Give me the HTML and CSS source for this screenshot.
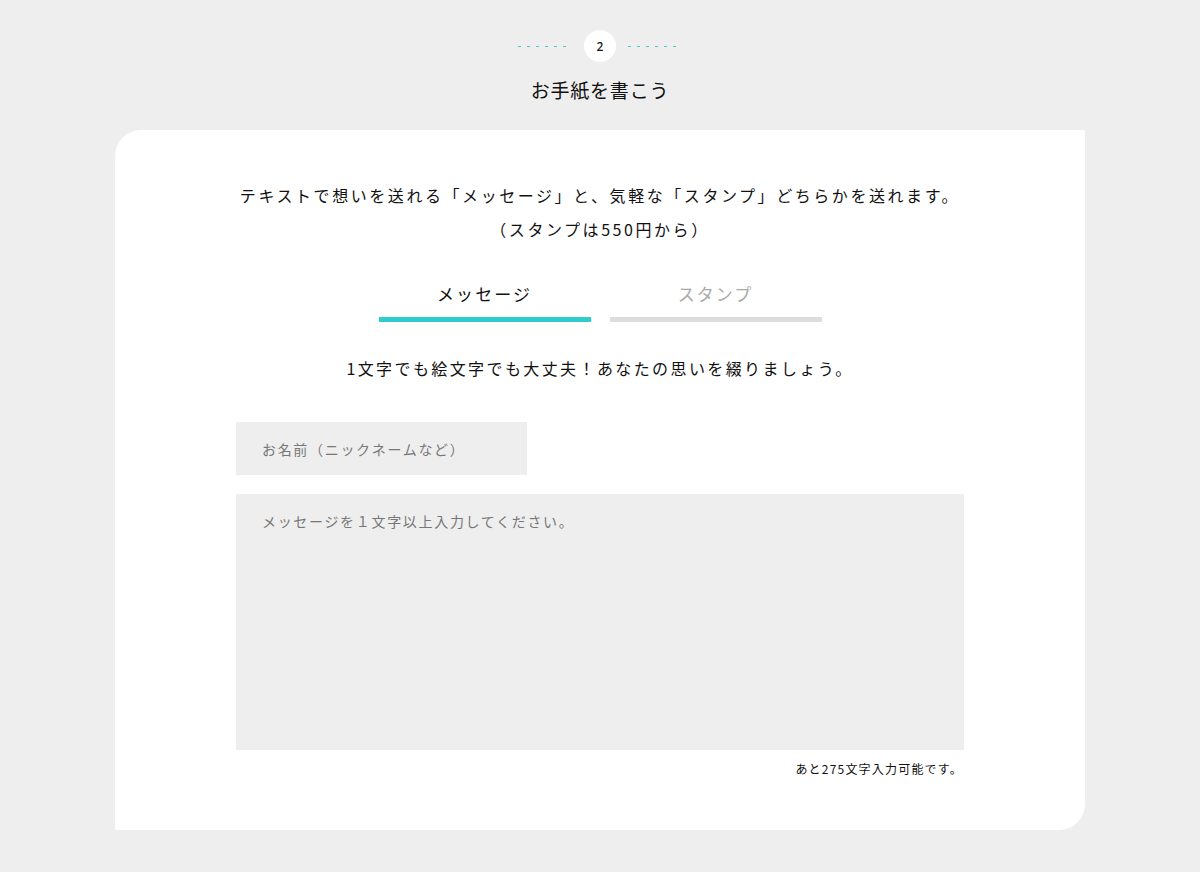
FILE: index.html
```html
<!DOCTYPE html>
<html lang="ja">
<head>
<meta charset="utf-8">
<title>お手紙を書こう</title>
<link rel="stylesheet" href="styles.css">
</head>
<body>
<div class="page">
  <div class="step">
    <span class="dots"></span>
    <span class="step-num">2</span>
    <span class="dots"></span>
  </div>
  <h2 class="title">お手紙を書こう</h2>
  <section class="card">
    <p class="lead">テキストで想いを送れる「メッセージ」と、気軽な「スタンプ」どちらかを送れます。<br>（スタンプは550円から）</p>
    <div class="tabs">
      <div class="tab active">メッセージ</div>
      <div class="tab">スタンプ</div>
    </div>
    <p class="sub">1文字でも絵文字でも大丈夫！あなたの思いを綴りましょう。</p>
    <form class="form">
      <input class="name" type="text" placeholder="お名前（ニックネームなど）">
      <textarea class="message" placeholder="メッセージを１文字以上入力してください。"></textarea>
      <p class="counter">あと275文字入力可能です。</p>
    </form>
  </section>
</div>
</body>
</html>
```

FILE: styles.css
```css
html, body {
  margin: 0;
  padding: 0;
  background: #eeeeee;
}
body {
  font-family: "Noto Sans CJK JP", "Noto Sans", sans-serif;
  color: #111;
  text-spacing-trim: space-all;
}
.page {
  width: 970px;
  margin: 0 auto;
  padding-top: 30px;
}
.step {
  display: flex;
  justify-content: center;
  align-items: center;
  gap: 12px;
  height: 32px;
}
.dots {
  width: 54px;
  height: 1px;
  background: repeating-linear-gradient(90deg, #4fc6c6 0 3px, transparent 3px 9px);
}
.step-num {
  width: 32px;
  height: 32px;
  border-radius: 50%;
  background: #fff;
  display: flex;
  align-items: center;
  justify-content: center;
  font-size: 12px;
  font-family: "Noto Sans", sans-serif;
  font-weight: 500;
}
.title {
  margin: 14px 0 0;
  text-align: center;
  font-size: 19px;
  font-weight: 400;
  line-height: 28px;
  letter-spacing: 0.04em;
}
.card {
  margin-top: 26px;
  background: #fff;
  border-radius: 26px 0 26px 0;
  padding: 48px 0 52px;
}
.lead {
  margin: 0;
  text-align: center;
  font-size: 16px;
  line-height: 34px;
  letter-spacing: 0.16em;
}
.tabs {
  display: flex;
  justify-content: center;
  gap: 19px;
  margin-top: 35px;
}
.tab {
  width: 212px;
  text-align: center;
  font-size: 17px;
  line-height: 26px;
  letter-spacing: 0.12em;
  padding-bottom: 10px;
  border-bottom: 5px solid #dddddd;
  color: #aaaaaa;
}
.tab.active {
  color: #111;
  border-bottom-color: #2ecccb;
}
.sub {
  margin: 31px 0 0;
  text-align: center;
  font-size: 16px;
  line-height: 30px;
  letter-spacing: 0.15em;
}
.form {
  width: 728px;
  margin: 39px auto 0;
  display: flex;
  flex-direction: column;
}
.name, .message {
  border: none;
  outline: none;
  background: #eeeeee;
  font-family: "Noto Sans CJK JP", "Noto Sans", sans-serif;
  font-size: 14px;
  letter-spacing: 0.12em;
  color: #333;
  box-sizing: border-box;
  margin: 0;
}
.name {
  width: 291px;
  height: 53px;
  padding: 0 0 0 26px;
}
.message {
  width: 728px;
  height: 256px;
  margin-top: 19px;
  padding: 17px 26px;
  line-height: 20px;
  resize: none;
}
.name::placeholder, .message::placeholder {
  color: #777777;
}
.counter {
  margin: 10px 0 0;
  text-align: right;
  font-size: 12px;
  line-height: 18px;
  letter-spacing: 0.1em;
  padding-right: 1px;
}
```
